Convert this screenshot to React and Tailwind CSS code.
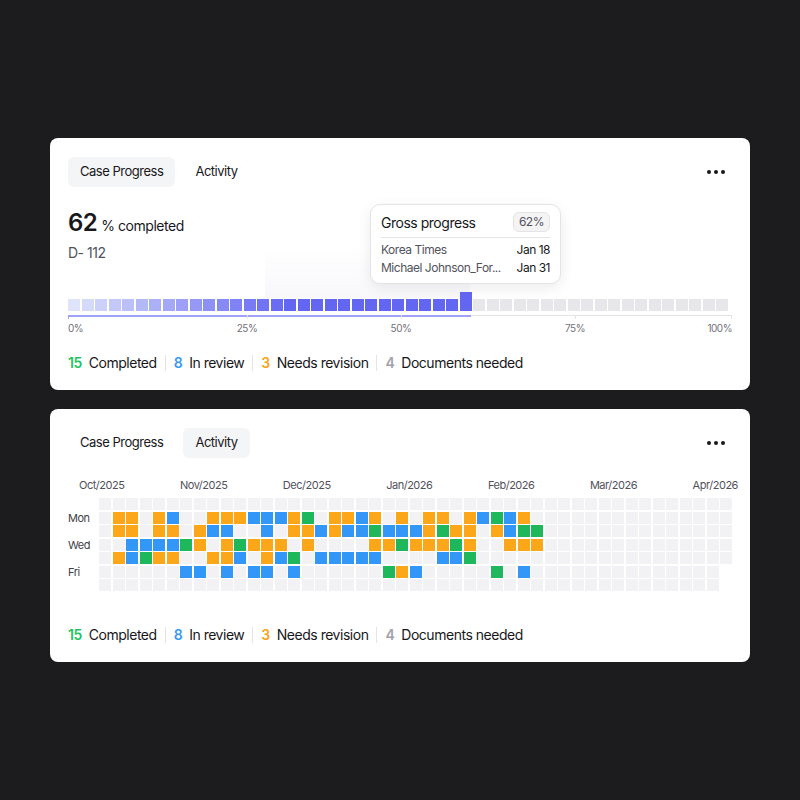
import React from "react";

const CELL = {
  o: "bg-[#fca61a]",
  b: "bg-[#3397f8]",
  g: "bg-[#1fb75b]",
  ".": "bg-[#f2f2f4]",
};

const pad = (s) => s + ".".repeat(47 - s.length);
const ROWS = [
  pad(""),
  pad(".oo.ob..ooobbbog.oobo.o.oo.obgbo"),
  pad(".oo.oo.obb..b.oobobbgbbbogoo.obgg"),
  pad("..bbbbgo.ogooo.o....oogooogo..ooo"),
  pad(".obgoo..oob.obg.bbbbb....bbg"),
  pad("......bb.b.bb.b......gob.....g.b"),
  pad(""),
];

const MONTHS = ["Oct/2025", "Nov/2025", "Dec/2025", "Jan/2026", "Feb/2026", "Mar/2026", "Apr/2026"];

function Tabs({ active }) {
  const tab = (name) => (
    <div
      className={
        "h-[30px] px-3 flex items-center rounded-md text-[13px] text-zinc-900 " +
        (active === name ? "bg-[#f4f5f7]" : "")
      }
    >
      {name}
    </div>
  );
  return (
    <div className="flex items-center justify-between h-[30px]">
      <div className="flex items-center gap-2">
        {tab("Case Progress")}
        {tab("Activity")}
      </div>
      <div className="flex items-center gap-[3px] pr-[7px]">
        <div className="w-[4px] h-[4px] rounded-full bg-zinc-900" />
        <div className="w-[4px] h-[4px] rounded-full bg-zinc-900" />
        <div className="w-[4px] h-[4px] rounded-full bg-zinc-900" />
      </div>
    </div>
  );
}

function Legend() {
  const Sep = () => <div className="w-px h-[16px] bg-zinc-200" />;
  return (
    <div className="flex items-center gap-[8px] h-[20px] text-[14px] leading-[20px]">
      <div className="flex items-center gap-[7px]">
        <span className="font-semibold text-[#22c55e]">15</span>
        <span className="text-zinc-900">Completed</span>
      </div>
      <Sep />
      <div className="flex items-center gap-[7px]">
        <span className="font-semibold text-[#3b9af6]">8</span>
        <span className="text-zinc-900">In review</span>
      </div>
      <Sep />
      <div className="flex items-center gap-[7px]">
        <span className="font-semibold text-[#f6a521]">3</span>
        <span className="text-zinc-900">Needs revision</span>
      </div>
      <Sep />
      <div className="flex items-center gap-[7px]">
        <span className="font-semibold text-[#a1a1aa]">4</span>
        <span className="text-zinc-900">Documents needed</span>
      </div>
    </div>
  );
}

function mix(a, b, t) {
  const pa = [parseInt(a.slice(1, 3), 16), parseInt(a.slice(3, 5), 16), parseInt(a.slice(5, 7), 16)];
  const pb = [parseInt(b.slice(1, 3), 16), parseInt(b.slice(3, 5), 16), parseInt(b.slice(5, 7), 16)];
  const c = pa.map((v, i) => Math.round(v + (pb[i] - v) * t));
  return `rgb(${c[0]}, ${c[1]}, ${c[2]})`;
}

function ProgressBars() {
  const cells = [];
  for (let i = 0; i < 49; i++) {
    let color;
    if (i < 30) {
      const t = Math.min(1, i / 16);
      color = mix("#dfe4fb", "#6366f1", Math.pow(t, 0.9));
    } else color = "#e7e7eb";
    cells.push(
      <div
        key={i}
        className={"w-[12px] " + (i === 29 ? "h-[19px]" : "h-[12px]")}
        style={{ backgroundColor: color }}
      />
    );
  }
  return <div className="flex items-end gap-[1.5px] h-[19px]">{cells}</div>;
}

function Axis() {
  const ticks = [0, 179, 333, 507, 663];
  return (
    <div className="relative w-[664px] h-[24px] mt-[4px]">
      <div className="absolute left-0 top-0 w-[664px] h-px bg-zinc-200" />
      <div className="absolute left-0 top-0 w-[403px] h-[1.5px] bg-[#9fa2f6]" />
      {ticks.map((x, i) => (
        <div
          key={i}
          className={"absolute top-0 w-px h-[4px] " + (i === 0 ? "bg-[#9fa2f6]" : "bg-zinc-200")}
          style={{ left: x }}
        />
      ))}
      <span className="absolute left-0 top-[6px] text-[10px] leading-[14px] text-zinc-500">0%</span>
      <span className="absolute left-[179px] -translate-x-1/2 top-[6px] text-[10px] leading-[14px] text-zinc-500">25%</span>
      <span className="absolute left-[333px] -translate-x-1/2 top-[6px] text-[10px] leading-[14px] text-zinc-500">50%</span>
      <span className="absolute left-[507px] -translate-x-1/2 top-[6px] text-[10px] leading-[14px] text-zinc-500">75%</span>
      <span className="absolute right-0 top-[6px] text-[10px] leading-[14px] text-zinc-500">100%</span>
    </div>
  );
}

function Tooltip() {
  return (
    <div className="absolute left-[320px] top-[66px] w-[191px] rounded-[10px] bg-white border border-zinc-200 shadow-[0_4px_14px_rgba(0,0,0,0.08)] px-[10px] pt-[7px] pb-[7px]">
      <div className="flex items-center justify-between h-[20px]">
        <span className="text-[14px] text-zinc-900">Gross progress</span>
        <span className="h-[20px] px-[5px] flex items-center rounded-md bg-[#f4f4f5] border border-zinc-200 text-[12px] text-zinc-600">
          62%
        </span>
      </div>
      <div className="mt-[5px] border-t border-zinc-200" />
      <div className="pt-[4px] flex flex-col gap-[2px] text-[12px] leading-[16px]">
        <div className="flex justify-between">
          <span className="text-zinc-600">Korea Times</span>
          <span className="text-zinc-900">Jan 18</span>
        </div>
        <div className="flex justify-between">
          <span className="text-zinc-600 whitespace-nowrap">Michael Johnson_For...</span>
          <span className="text-zinc-900">Jan 31</span>
        </div>
      </div>
    </div>
  );
}

function ProgressCard() {
  return (
    <div className="relative w-[700px] h-[252px] rounded-lg bg-white px-[18px] pt-[19px]">
      <Tabs active="Case Progress" />
      <div className="absolute left-[215px] top-[107px] w-[205px] h-[53px] bg-gradient-to-b from-white to-[#f8f8fb]" />
      <div className="relative mt-[20px] flex items-baseline h-[32px]">
        <span className="text-[24px] leading-[32px] font-semibold text-zinc-900">62</span>
        <span className="ml-[4px] text-[14px] text-zinc-900">% completed</span>
      </div>
      <div className="relative mt-[4px] text-[14px] leading-[20px] text-zinc-600">D- 112</div>
      <div className="relative mt-[29px]">
        <ProgressBars />
        <Axis />
      </div>
      <div className="mt-[14px]">
        <Legend />
      </div>
      <Tooltip />
    </div>
  );
}

function ActivityCard() {
  return (
    <div className="w-[700px] h-[253px] rounded-lg bg-white px-[18px] pt-[19px]">
      <Tabs active="Activity" />
      <div className="mt-[20px] ml-[11px] mr-[-6px] flex justify-between text-[11px] leading-[14px] text-zinc-600">
        {MONTHS.map((m) => (
          <span key={m}>{m}</span>
        ))}
      </div>
      <div className="mt-[6px] flex">
        <div className="w-[31px] flex flex-col gap-[1.5px] text-[11px] leading-[12px] text-zinc-700">
          {ROWS.map((_, r) => (
            <div key={r} className="h-[12px] whitespace-nowrap">
              {r === 1 ? "Mon" : r === 3 ? "Wed" : r === 5 ? "Fri" : ""}
            </div>
          ))}
        </div>
        <div className="flex gap-[1.5px]">
          {Array.from({ length: 47 }).map((_, c) => (
            <div key={c} className="flex flex-col gap-[1.5px]">
              {ROWS.map((row, r) =>
                c === 46 && r > 4 ? null : (
                  <div key={r} className={"w-[12px] h-[12px] " + CELL[row[c]]} />
                )
              )}
            </div>
          ))}
        </div>
      </div>
      <div className="mt-[34px]">
        <Legend />
      </div>
    </div>
  );
}

export default function App() {
  return (
    <div className="w-full h-[800px] bg-[#1c1c1e] flex flex-col items-center pt-[138px] gap-[19px] font-['Inter',sans-serif] tracking-[-0.03em]">
      <ProgressCard />
      <ActivityCard />
    </div>
  );
}
